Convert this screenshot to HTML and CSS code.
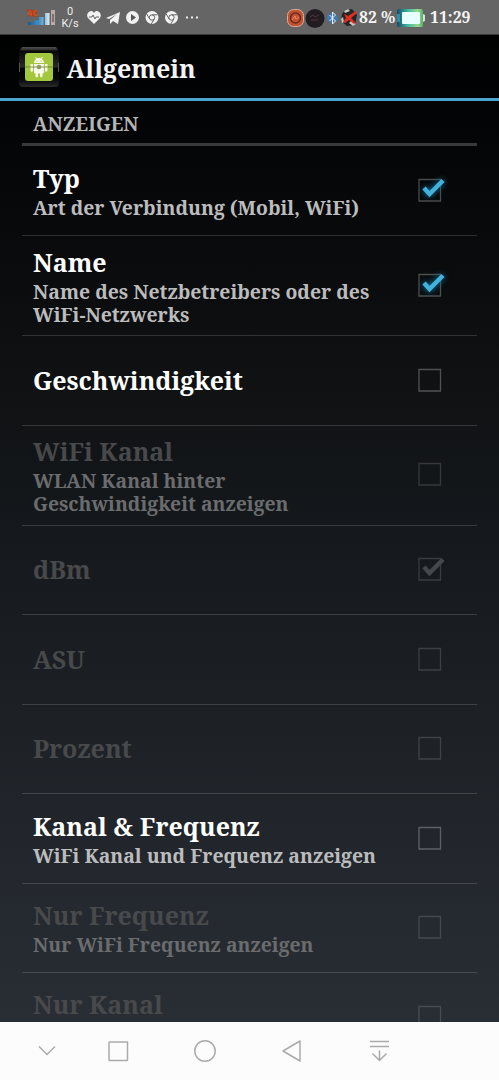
FILE: index.html
```html
<!DOCTYPE html>
<html lang="de">
<head>
<meta charset="utf-8">
<meta name="viewport" content="width=device-width">
<title>Allgemein</title>
<link rel="stylesheet" href="styles.css">
</head>
<body>
<div class="screen">
  <header class="status">
    <svg class="status-left" width="210" height="35" viewBox="0 0 210 35">
      <defs>
        <linearGradient id="sig" x2="1"><stop stop-color="#145b91"/><stop offset=".6" stop-color="#4b9fd3"/><stop offset="1" stop-color="#dcebf3"/></linearGradient>
      </defs>
      <path d="M28 22h5v3h-5zM34 20h4.500v5H34zM39 17h4.500v8H39zM45 13h4.500v12H45z" fill="url(#sig)"/>
      <path d="M51 10h4v15h-4z" fill="#b9aaa6"/><path d="M52 14h2v8h-2z" fill="#806f6d"/>
      <path d="M26 9l8 1 4 1-2 4 2 2-10-1 2-3z" fill="#a83f20"/>
      <path d="M30 10l-2 4h4M31 11v5M37 11h-3v4h3" fill="none" stroke="#db5420" stroke-width="1"/>
      <path d="M94 24l-6-6c-3-4 3-10 6-5 3-5 9 1 6 5z" fill="#f2f2f2"/>
      <path d="M89 17h3l1-2 2 4 1-2h3" fill="none" stroke="#666" stroke-width="1"/>
      <path d="M106 18l14-6-2 12-5-3-3 3v-4l7-6-8 5z" fill="#f2f2f2"/>
      <circle cx="132.500" cy="17.500" r="6.500" fill="#f2f2f2"/><path d="M131 14l5 3.500-5 3.500z" fill="#555"/>
      <g id="chrome"><circle cx="152" cy="17.500" r="6.500" fill="#f2f2f2"/><circle cx="152" cy="17.500" r="2.700" fill="none" stroke="#666"/><path d="M152 14.800h5.500M149.700 19l-3-5M154.300 19l-3 5" stroke="#666"/></g>
      <use href="#chrome" x="19.500"/>
      <path d="M186 16.500h2v2h-2zM191 16.500h2v2h-2zM196 16.500h2v2h-2z" fill="#eee"/>
    </svg>
    <div class="rate"><span>0</span><span>K/s</span></div>
    <div class="status-right">
      <svg width="73" height="28" viewBox="286 3 73 28">
        <rect x="287.500" y="8.500" width="16" height="17" rx="6" fill="#c65132" stroke="#d6b093"/>
        <circle cx="295.500" cy="17" r="5" fill="none" stroke="#632e22" stroke-width="1.500"/><path d="M292 19l3-4 1 3 3-2" fill="none" stroke="#ef8460"/>
        <circle cx="315" cy="17.500" r="9.500" fill="#211c21"/><path d="M310 16l3-2 2 2 4-2M311 19h7" fill="none" stroke="#543039"/>
        <ellipse cx="332.500" cy="17" rx="5.500" ry="5" fill="#3e77b5"/><path d="M329.500 14l6 6-3 3V11l3 3-6 6" fill="none" stroke="#eee" stroke-width="1"/>
        <path d="M342 13l3-4 7-1 5 6-2 10-8 1-6-5z" fill="#252525"/><path d="M344 10l4-2 2 2-5 2M341 18l2-2 1 5-2 1M352 19l4 4-3 2-4-3z" fill="#c6c6c6"/><path d="M343 21l3-4-2-4 4 2 8-5 1 2-6 5 5 5-2 1-5-4-4 3z" fill="#df2f22"/>
      </svg>
      <span class="percent">82 %</span>
      <svg class="battery" width="31" height="20" viewBox="0 0 31 20">
        <defs><linearGradient id="bat" x2="1"><stop stop-color="#164a6b"/><stop offset=".45" stop-color="#43bfa3"/><stop offset=".8" stop-color="#99d888"/><stop offset="1" stop-color="#59af71"/></linearGradient></defs>
        <rect x="1" y="1" width="26" height="18" rx="1.500" fill="url(#bat)"/><rect x="6" y="4" width="18" height="12" rx="1" fill="#e8ffff"/><path d="M1 6h3v8H1z" fill="#258fae"/><path d="M27 6l2 1v6l-2 1z" fill="#d5e3d7"/>
      </svg>
      <span class="clock">11:29</span>
    </div>
  </header>
  <header class="appbar">
    <svg width="42" height="42" viewBox="0 0 42 42">
      <defs><linearGradient id="tile" x2="0" y2="1"><stop stop-color="#505050"/><stop offset=".07" stop-color="#303030"/><stop offset=".1" stop-color="#080808"/><stop offset=".5" stop-color="#292929"/><stop offset=".53" stop-color="#050505"/><stop offset=".8" stop-color="#080808"/><stop offset="1" stop-color="#292929"/></linearGradient></defs>
      <path d="M4 1h34l3 5v31a4 4 0 0 1-4 4H5a4 4 0 0 1-4-4V6z" fill="url(#tile)"/>
      <path d="M1.500 17v9M40.500 17v9" stroke="#555"/>
      <rect x="7" y="7" width="28" height="28" rx="3" fill="#a4c83d"/>
      <path d="M16 17a5 5 0 0 1 10 0zM16 18h10v8a1.500 1.500 0 0 1-1.500 1.500V30a1.200 1.200 0 0 1-2.500 0v-2.500h-2V30a1.200 1.200 0 0 1-2.500 0v-2.500A1.500 1.500 0 0 1 16 26zM12.500 18h2.500v6.500a1.200 1.200 0 0 1-2.500 0zM27 18h2.500v6.500a1.200 1.200 0 0 1-2.500 0z" fill="#f7f9ea"/>
      <path d="M17.500 11l1.500 2M24.500 11l-1.500 2" stroke="#f7f9ea"/><circle cx="19" cy="15" r=".6" fill="#a4c83d"/><circle cx="23" cy="15" r=".6" fill="#a4c83d"/>
      <path d="M7 21h28" stroke="#607526" opacity=".75"/><circle cx="21" cy="21" r="2.300" fill="#8c9b66"/>
    </svg>
    <h1>Allgemein</h1>
  </header>
  <main class="prefs">
    <h2>ANZEIGEN</h2>
    <section class="row typ on"><div class="copy"><h3>Typ</h3><p>Art der Verbindung (Mobil, WiFi)</p></div><svg class="check" viewBox="0 0 32 32"><path class="box" d="M4 5.500h21.500v21.500h-21.500z"/><path class="tick" d="M9 14l5.500 6L28 6.500"/></svg></section>
    <section class="row tall on"><div class="copy"><h3>Name</h3><p>Name des Netzbetreibers oder des WiFi-Netzwerks</p></div><svg class="check" viewBox="0 0 32 32"><path class="box" d="M4 5.500h21.500v21.500h-21.500z"/><path class="tick" d="M9 14l5.500 6L28 6.500"/></svg></section>
    <section class="row single first"><div class="copy"><h3>Geschwindigkeit</h3></div><svg class="check" viewBox="0 0 32 32"><path class="box" d="M4 5.500h21.500v21.500h-21.500z"/></svg></section>
    <section class="row tall disabled"><div class="copy"><h3>WiFi Kanal</h3><p>WLAN Kanal hinter Geschwindigkeit anzeigen</p></div><svg class="check" viewBox="0 0 32 32"><path class="box" d="M4 5.500h21.500v21.500h-21.500z"/></svg></section>
    <section class="row single disabled"><div class="copy"><h3>dBm</h3></div><svg class="check" viewBox="0 0 32 32"><path class="box" d="M4 5.500h21.500v21.500h-21.500z"/><path class="tick" d="M9 14l5.500 6L28 6.500"/></svg></section>
    <section class="row single disabled"><div class="copy"><h3>ASU</h3></div><svg class="check" viewBox="0 0 32 32"><path class="box" d="M4 5.500h21.500v21.500h-21.500z"/></svg></section>
    <section class="row single disabled"><div class="copy"><h3>Prozent</h3></div><svg class="check" viewBox="0 0 32 32"><path class="box" d="M4 5.500h21.500v21.500h-21.500z"/></svg></section>
    <section class="row"><div class="copy"><h3>Kanal &amp; Frequenz</h3><p>WiFi Kanal und Frequenz anzeigen</p></div><svg class="check" viewBox="0 0 32 32"><path class="box" d="M4 5.500h21.500v21.500h-21.500z"/></svg></section>
    <section class="row disabled"><div class="copy"><h3>Nur Frequenz</h3><p>Nur WiFi Frequenz anzeigen</p></div><svg class="check" viewBox="0 0 32 32"><path class="box" d="M4 5.500h21.500v21.500h-21.500z"/></svg></section>
    <section class="row last disabled"><div class="copy"><h3>Nur Kanal</h3></div><svg class="check" viewBox="0 0 32 32"><path class="box" d="M4 5.500h21.500v21.500h-21.500z"/></svg></section>
  </main>
  <nav class="navbar">
    <svg width="499" height="58" viewBox="0 0 499 58">
      <path d="M39 24.500l8 8 8-8"/><rect x="109" y="20" width="18.500" height="18.500" rx=".5"/><circle cx="205" cy="29" r="10.200"/><path d="M283 29l17-10v20z" stroke-linejoin="round"/><path d="M370 19.500h19M370 24.500h19M379.500 28.500v10M372.500 31.500l7 7 7-7"/>
    </svg>
  </nav>
</div>
</body>
</html>
```
FILE: styles.css
```css
* { box-sizing: border-box; }
body { margin: 0; background: #000; }
h1, h2, h3, p { margin: 0; font-weight: 700; white-space: nowrap; }
svg { display: block; flex: none; }
.screen {
  width: 499px; height: 1080px; overflow: hidden;
  display: flex; flex-direction: column;
  background: linear-gradient(#000 0, #020304 100px, #101214 400px, #171b1f 580px, #292e35 1022px);
  font-family: "Noto Serif", "Droid Serif", "DejaVu Serif Condensed", "DejaVu Serif", serif;
}
.status { height: 35px; flex: none; display: grid; grid-template-columns: 286px 1fr; background: #656565; border-bottom: 1px solid #373737; }
.status-left, .rate { grid-area: 1 / 1; }
.rate { width: 30px; margin: 6px 0 0 55px; display: flex; flex-direction: column; align-items: center; font: 11px/12px Roboto, sans-serif; color: #eee; }
.status-right { grid-area: 1 / 2; display: flex; align-items: center; color: #f4f4f4; font-size: 15.800px; line-height: 20px; font-weight: 700; }
.percent, .clock { margin-top: -2px; }
.percent { width: 37px; white-space: nowrap; }
.clock { margin-left: 3px; }
.appbar { height: 66px; flex: none; display: flex; align-items: center; padding-left: 18px; border-bottom: 3px solid #4aa5cf; }
.appbar h1 { margin-left: 6.500px; padding-top: 2px; color: #f3f3f3; font-size: 25px; line-height: 32px; }
.prefs { height: 921px; flex: none; overflow: hidden; padding: 0 22px; display: flex; flex-direction: column; }
h2 { height: 45px; flex: none; padding-left: 11px; color: #b4b4b4; border-bottom: 3px solid #383939; font-size: 19.300px; line-height: 46px; }
.row { height: 89.500px; flex: none; display: flex; align-items: center; border-bottom: 1px solid rgb(255 255 255 / 15%); color: #fff; }
.row.typ { height: 90px; }
.row.tall { height: 100px; }
.row.first { height: 89.500px; }
.copy { width: 360px; padding-left: 11px; }
h3 { font-size: 25px; line-height: 34px; margin-top: -1px; padding-bottom: 2px; }
.single h3 { margin-top: 0; padding-bottom: 1px; }
p { width: 349px; color: #bcbcbd; font-size: 19.400px; line-height: 22.700px; margin-bottom: -1px; white-space: normal; }
.check { width: 32px; height: 32px; margin: 0 0 1.500px 33px; overflow: visible; }
.box { fill: none; stroke: rgb(255 255 255 / 27%); stroke-width: 1.300; }
.tick { fill: none; stroke: #42b2dd; stroke-width: 4.500; filter: drop-shadow(0 0 3px #087eaa); }
.disabled h3 { color: #48494b; }
.disabled p { color: #6a6c6e; }
.disabled .box { stroke: rgb(255 255 255 / 15%); }
.disabled .tick { stroke: #44484b; filter: none; }
.disabled.tall p { width: 275px; }
.last .copy { align-self: flex-start; padding-top: 14px; }
.last h3 { margin: 0; }
.navbar { height: 58px; flex: none; background: #fcfcfc; }
.navbar path, .navbar rect, .navbar circle { fill: none; stroke: #aaa; stroke-width: 1.500; }
```
